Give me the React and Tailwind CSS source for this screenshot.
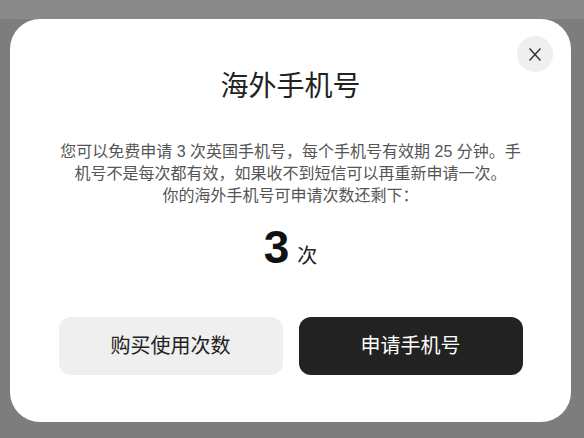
import React from 'react';

const CloseIcon = () => (
    <svg width="12" height="13" viewBox="0 0 12 13" fill="none" stroke="#333" strokeWidth="1.4" strokeLinecap="square">
        <path d="M1 1 L11 12" />
        <path d="M11 1 L1 12" />
    </svg>
);

const App = () => {
    return (
        <div
            className="w-[584px] h-[438px] bg-[#7d7d7d] overflow-hidden flex flex-col"
            style={{ fontFamily: '"Liberation Sans", "Noto Sans CJK SC", sans-serif' }}
        >
            <div className="h-[19px] bg-[#8a8a8a] shrink-0" />
            <div className="pl-[10px]">
                {/* dialog */}
                <div className="relative w-[561px] h-[403px] bg-white rounded-[30px] px-[48px] pt-[48px] flex flex-col items-center">
                    <button className="absolute top-[17px] right-[18px] w-[36px] h-[36px] rounded-full bg-[#efefef] flex items-center justify-center">
                        <CloseIcon />
                    </button>

                    <h2 className="text-[28px] leading-[39px] text-[#222] font-normal">海外手机号</h2>

                    <p className="mt-[35px] text-[16px] leading-[22px] text-[#555] text-center">
                        您可以免费申请 3 次英国手机号，每个手机号有效期 25 分钟。手机号不是每次都有效，如果收不到短信可以再重新申请一次。
                        <br />
                        你的海外手机号可申请次数还剩下：
                    </p>

                    <div className="mt-[17px] flex items-baseline gap-[8px] text-[#111]">
                        <span className="text-[46px] leading-[46px] font-bold">3</span>
                        <span className="text-[20px] leading-[20px] text-[#222]">次</span>
                    </div>

                    <div className="mt-[47px] flex gap-[16px]">
                        <button className="w-[224px] h-[58px] rounded-[12px] bg-[#efefef] text-[20px] text-[#222]">
                            购买使用次数
                        </button>
                        <button className="w-[224px] h-[58px] rounded-[12px] bg-[#222] text-[20px] text-white">
                            申请手机号
                        </button>
                    </div>
                </div>
            </div>
        </div>
    );
};

export default App;
